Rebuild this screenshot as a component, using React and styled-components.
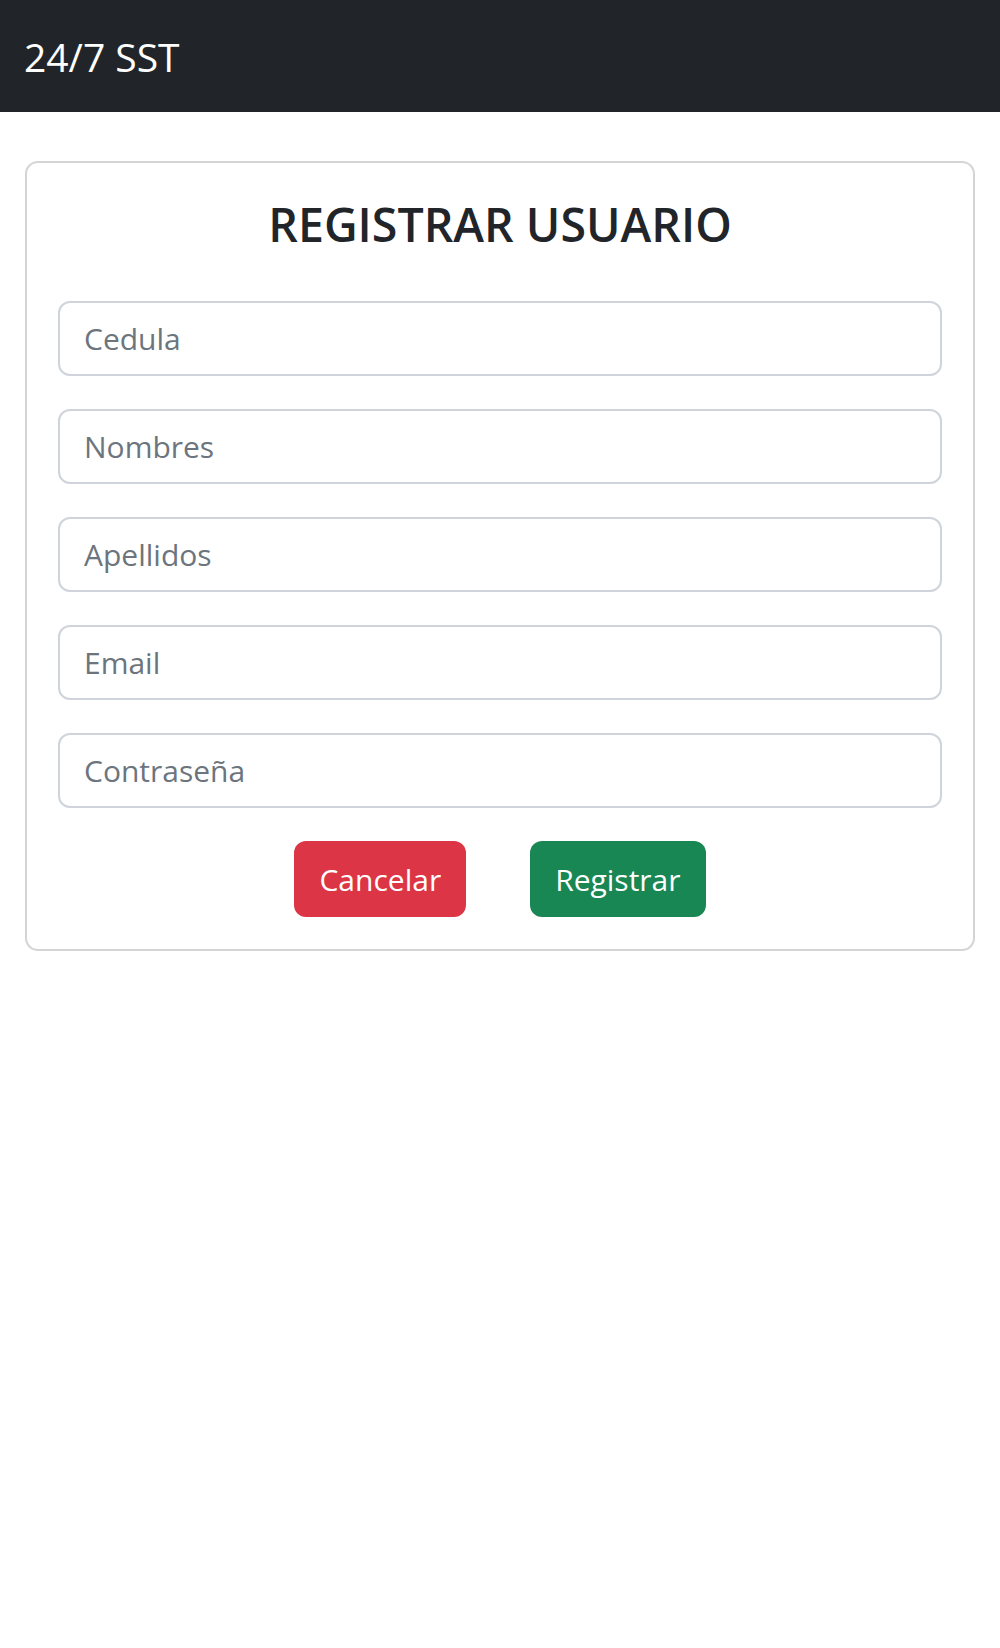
import React, { useState } from "react";
import { styled, createGlobalStyle } from "styled-components";

const GlobalStyle = createGlobalStyle`
  * { box-sizing: border-box; }
  body {
    margin: 0;
    background: #fff;
    font-family: "Open Sans", "Noto Sans", "Liberation Sans", sans-serif;
    color: #212529;
  }
`;

const Navbar = styled.nav`
  background: #212529;
  height: 112px;
  display: flex;
  align-items: center;
  padding: 0 24px;
`;

const Brand = styled.a`
  color: #fff;
  font-size: 39px;
  line-height: 60px;
  text-decoration: none;
  margin-top: 2px;
`;

const Container = styled.main`
  padding: 49px 25px 0;
`;

const Card = styled.section`
  border: 2px solid #d4d4d5;
  border-radius: 13px;
  padding: 33px 31px 32px;
`;

const Title = styled.h3`
  margin: 0 0 48px;
  text-align: center;
  font-size: 46.5px;
  font-weight: 600;
  line-height: 57px;
  color: #212529;
`;

const Form = styled.form`
  display: flex;
  flex-direction: column;
  gap: 33px;
`;

const Input = styled.input`
  display: block;
  width: 100%;
  height: 75px;
  padding: 0 24px;
  border: 2px solid #ced4da;
  border-radius: 12px;
  font-family: inherit;
  font-size: 30px;
  color: #212529;
  outline: none;

  &::placeholder {
    color: #6c757d;
  }
`;

const Actions = styled.div`
  display: flex;
  justify-content: center;
  gap: 64px;
`;

const Button = styled.button`
  height: 76px;
  padding: 0 ${(p) => p.$px}px;
  border: none;
  border-radius: 12px;
  background: ${(p) => p.$bg};
  color: #fff;
  font-family: inherit;
  font-size: 30px;
  cursor: pointer;
`;

const fields = [
  { name: "cedula", placeholder: "Cedula" },
  { name: "nombres", placeholder: "Nombres" },
  { name: "apellidos", placeholder: "Apellidos" },
  { name: "email", placeholder: "Email", type: "email" },
  { name: "password", placeholder: "Contraseña", type: "password" },
];

const App = () => {
  const [form, setForm] = useState({});

  const register = (field) => ({
    value: form[field] || "",
    onChange: (ev) => setForm({ ...form, [field]: ev.target.value }),
  });

  return (
    <>
      <GlobalStyle />
      <Navbar>
        <Brand href="#">24/7 SST</Brand>
      </Navbar>
      <Container>
        <Card>
          <Title>REGISTRAR USUARIO</Title>
          <Form onSubmit={(ev) => ev.preventDefault()}>
            {fields.map((f) => (
              <Input
                key={f.name}
                type={f.type || "text"}
                placeholder={f.placeholder}
                {...register(f.name)}
              />
            ))}
            <Actions>
              <Button type="button" $bg="#dc3545" $px={25} onClick={() => setForm({})}>
                Cancelar
              </Button>
              <Button type="submit" $bg="#198754" $px={25}>
                Registrar
              </Button>
            </Actions>
          </Form>
        </Card>
      </Container>
    </>
  );
};

export default App;
